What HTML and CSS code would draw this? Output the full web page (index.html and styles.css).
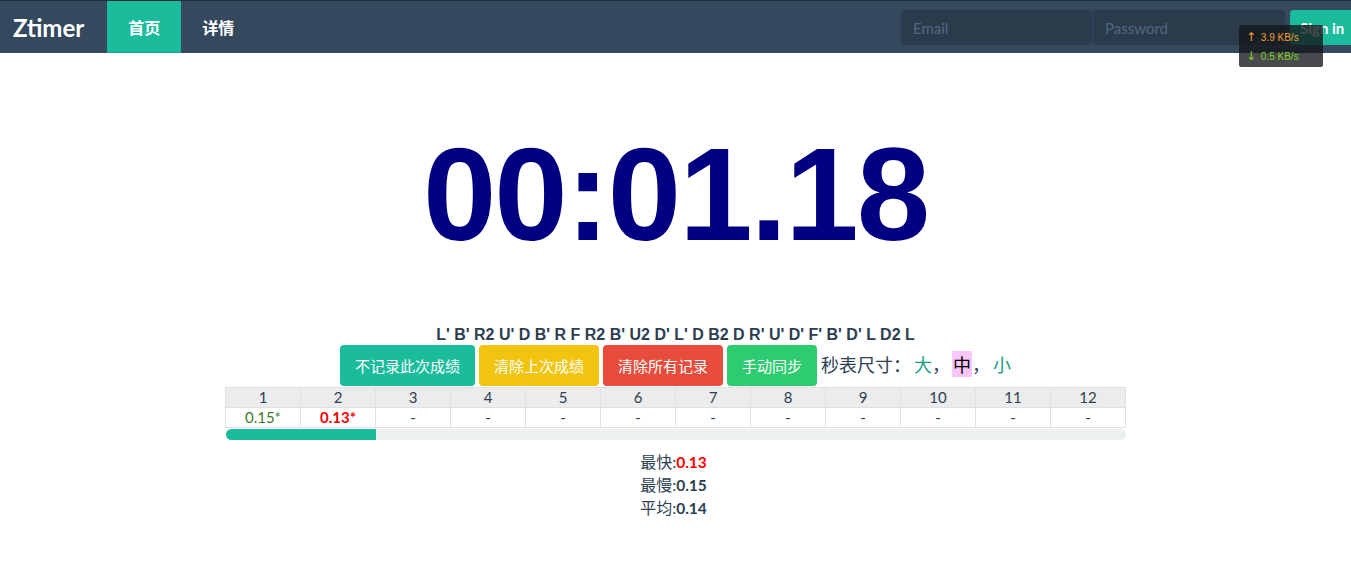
FILE: index.html
```html
<!DOCTYPE html>
<html lang="zh">
<head>
<meta charset="utf-8">
<title>Ztimer</title>
<link rel="stylesheet" href="styles.css">
</head>
<body>
<nav class="navbar">
  <div class="nav-left">
    <a class="brand" href="#">Ztimer</a>
    <a class="nav-item active" href="#">首页</a>
    <a class="nav-item" href="#">详情</a>
  </div>
  <form class="nav-form">
    <input class="nav-input" type="text" placeholder="Email">
    <input class="nav-input" type="password" placeholder="Password">
    <button class="signin" type="button">Sign in</button>
  </form>
</nav>
<div class="netspeed">
  <div class="up"><span class="arrow">↑</span> 3.9 KB/s</div>
  <div class="down"><span class="arrow">↓</span> 0.5 KB/s</div>
</div>
<main class="main">
  <div class="timer">00:01.18</div>
  <div class="scramble">L' B' R2 U' D B' R F R2 B' U2 D' L' D B2 D R' U' D' F' B' D' L D2 L</div>
  <div class="controls">
    <button class="btn btn-teal" type="button">不记录此次成绩</button>
    <button class="btn btn-yellow" type="button">清除上次成绩</button>
    <button class="btn btn-red" type="button">清除所有记录</button>
    <button class="btn btn-green" type="button">手动同步</button>
    <span class="size">秒表尺寸：<span class="size-opt">大</span>，<span class="size-cur">中</span>，<span class="size-opt">小</span></span>
  </div>
  <table class="records">
    <tr class="head">
      <td>1</td><td>2</td><td>3</td><td>4</td><td>5</td><td>6</td><td>7</td><td>8</td><td>9</td><td>10</td><td>11</td><td>12</td>
    </tr>
    <tr>
      <td class="t-green">0.15*</td><td class="t-red">0.13*</td><td>-</td><td>-</td><td>-</td><td>-</td><td>-</td><td>-</td><td>-</td><td>-</td><td>-</td><td>-</td>
    </tr>
  </table>
  <div class="progress"><div class="progress-bar" style="width:16.667%"></div></div>
  <div class="stats">
    <div class="stat">最快:<b class="best">0.13</b></div>
    <div class="stat">最慢:<b>0.15</b></div>
    <div class="stat">平均:<b>0.14</b></div>
  </div>
</main>
</body>
</html>
```

FILE: styles.css
```css
html, body {
  margin: 0;
  padding: 0;
  overflow: hidden;
}
body {
  font-family: Lato, "Noto Sans CJK SC", sans-serif;
  font-size: 15px;
  color: #2c3e50;
  background: #fff;
  width: 1351px;
  height: 574px;
}
.navbar {
  height: 52px;
  border-top: 1px solid #1f2a35;
  background: #34495e;
  display: flex;
  align-items: stretch;
  width: 1351px;
}
.nav-left {
  display: flex;
  align-items: stretch;
}
.brand {
  display: flex;
  align-items: center;
  padding: 0 23px 0 13px;
  color: #fff;
  font-weight: 700;
  font-size: 24px;
  text-decoration: none;
}
.nav-item {
  display: flex;
  align-items: center;
  padding: 0 21px;
  color: #fff;
  font-weight: 700;
  font-size: 16px;
  text-decoration: none;
  font-family: "Noto Sans CJK SC", sans-serif;
}
.nav-item.active {
  background: #1abc9c;
  box-shadow: inset 0 -1px 0 #16a085;
}
.nav-form {
  display: flex;
  align-items: center;
  padding-top: 1px;
  margin-left: auto;
  margin-right: -9px;
  flex-shrink: 0;
}
.nav-input {
  width: 191px;
  height: 35px;
  box-sizing: border-box;
  border: none;
  border-radius: 4px;
  background: #2b3b4c;
  color: #fff;
  font-family: Lato, sans-serif;
  font-size: 15px;
  padding: 0 12px;
  margin-right: 1px;
  outline: none;
}
.nav-input::placeholder {
  color: #4f6880;
}
.nav-input + .nav-input {
  width: 192px;
}
.signin {
  margin-left: 4px;
  height: 35px;
  width: 70px;
  padding: 0 0 0 10px;
  text-align: left;
  border: none;
  border-radius: 4px;
  background: #1abc9c;
  color: #fff;
  font-family: Lato, sans-serif;
  font-weight: 700;
  font-size: 15px;
}
.netspeed {
  position: absolute;
  left: 1239px;
  top: 25px;
  width: 84px;
  height: 42px;
  box-sizing: border-box;
  padding: 3px 0 0 7px;
  background: rgba(20, 22, 26, 0.78);
  border-radius: 2px;
  font-family: Arial, "Liberation Sans", sans-serif;
  font-size: 10px;
  line-height: 19px;
}
.netspeed .arrow {
  font-family: "DejaVu Sans", sans-serif;
  font-size: 12px;
  margin-right: 2px;
}
.netspeed .up { color: #f0a030; }
.netspeed .down { color: #7ed321; }
.main {
  display: flex;
  flex-direction: column;
  align-items: center;
}
.timer {
  margin-top: 77px;
  font-family: Arial, "Liberation Sans", sans-serif;
  font-weight: 700;
  font-size: 132px;
  letter-spacing: -2px;
  line-height: 130px;
  height: 130px;
  color: #000080;
}
.scramble {
  margin-top: 65px;
  font-family: Arial, "Liberation Sans", sans-serif;
  font-weight: 700;
  font-size: 16px;
  line-height: 20px;
  color: #2c3e50;
}
.controls {
  display: flex;
  align-items: center;
  gap: 4px;
  height: 41px;
}
.btn {
  height: 41px;
  border: none;
  border-radius: 4px;
  padding: 0 15px;
  color: #fff;
  font-family: Lato, "Noto Sans CJK SC", sans-serif;
  font-size: 15px;
}
.btn-teal { background: #1abc9c; }
.btn-yellow { background: #f1c40f; }
.btn-red { background: #e74c3c; }
.btn-green { background: #2ecc71; }
.size {
  font-size: 18px;
  color: #2c3e50;
  font-family: "Noto Sans CJK SC", sans-serif;
  margin-bottom: 4px;
}
.size-opt {
  color: #16a085;
  padding: 0 0 0 3px;
}
.size-cur {
  background: #f8c6f8;
  color: #000;
  padding: 0 1px;
  margin-left: 2px;
}
.records {
  margin-top: 1px;
  width: 901px;
  border-collapse: collapse;
  table-layout: fixed;
  font-size: 15px;
}
.records td {
  border: 1px solid #dde1e5;
  text-align: center;
  height: 19px;
  padding: 0;
  line-height: 19px;
}
.records .head td {
  background: #ececec;
}
.t-green { color: #3a7a2a; }
.t-red { color: #ff0000; font-weight: 700; }
.progress {
  width: 900px;
  height: 11px;
  margin-top: 1px;
  border-radius: 6px;
  background: #ecf0f1;
  overflow: hidden;
}
.progress-bar {
  height: 100%;
  background: #1abc9c;
}
.stats {
  margin-top: 10px;
  margin-right: 4px;
  display: flex;
  flex-direction: column;
  align-items: center;
}
.stat {
  height: 23px;
  line-height: 23px;
  font-size: 16px;
  white-space: nowrap;
}
.stat b { font-weight: 700; font-size: 15.5px; }
.stat .best { color: #ff0000; }
```
